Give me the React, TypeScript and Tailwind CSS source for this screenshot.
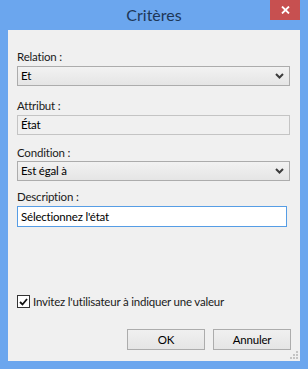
import React from 'react';

const font = { fontFamily: 'Lato, "Noto Sans", sans-serif' };

function Chevron() {
  return (
    <svg width="9" height="6" viewBox="0 0 9 6" className="shrink-0">
      <path d="M1 1 L4.5 4.5 L8 1" fill="none" stroke="#3c3c3c" strokeWidth="2" />
    </svg>
  );
}

function Select({ value }: { value: string }) {
  return (
    <div className="flex h-[20px] w-[273px] items-center justify-between border border-[#acacac] bg-gradient-to-b from-[#f2f2f2] to-[#e5e5e5] pl-[3px] pr-[5px] text-black">
      <span>{value}</span>
      <Chevron />
    </div>
  );
}

function Label({ children }: { children: React.ReactNode }) {
  return <div className="h-[16px] leading-[16px] text-[#1a1a1a]">{children}</div>;
}

function Grip() {
  return (
    <svg width="8" height="8" viewBox="0 0 8 8">
      {[
        [6, 0],
        [3, 3],
        [6, 3],
        [0, 6],
        [3, 6],
        [6, 6],
      ].map(([x, y]) => (
        <rect key={`${x}-${y}`} x={x} y={y} width="2" height="2" fill="#c4c4c4" />
      ))}
    </svg>
  );
}

export default function App() {
  return (
    <div className="flex h-[369px] w-[308px] flex-col bg-[#6ba6ee]" style={font}>
      {/* title bar */}
      <div className="flex h-[30px] shrink-0 items-start">
        <div className="w-[38px]" />
        <div className="flex h-[30px] flex-1 items-center justify-center pb-[1px] text-[16px] text-[#1d3657]">Critères</div>
        <button className="mr-[8px] flex h-[20px] w-[30px] items-center justify-center bg-[#c75050]">
          <svg width="9" height="8" viewBox="0 0 9 8">
            <path d="M1 0.5 L8 7.5 M8 0.5 L1 7.5" stroke="#fff" strokeWidth="1.8" />
          </svg>
        </button>
      </div>

      {/* client area */}
      <div className="mx-[8px] mb-[8px] flex flex-1 flex-col bg-[#f0f0f0] px-[9px] text-[11.5px] tracking-[-0.2px]">
        <div className="mt-[19px]">
          <Label>Relation :</Label>
          <div className="mt-[1px]">
            <Select value="Et" />
          </div>
        </div>

        <div className="mt-[12px]">
          <Label>Attribut :</Label>
          <div className="mt-[1px] flex h-[20px] w-[273px] items-center border border-[#c4c4c4] bg-[#f0f0f0] pl-[3px] text-black">
            État
          </div>
        </div>

        <div className="mt-[10px]">
          <Label>Condition :</Label>
          <div className="mt-[0px]">
            <Select value="Est égal à" />
          </div>
        </div>

        <div className="mt-[8px]">
          <Label>Description :</Label>
          <div className="mt-[1px] flex h-[21px] w-[270px] items-center border border-[#569de5] bg-white pl-[3px] text-black">
            Sélectionnez l'état
          </div>
        </div>

        <div className="mt-[66px] flex items-center gap-[3px] text-[#1a1a1a]">
          <div className="flex h-[13px] w-[13px] items-center justify-center border border-[#333] bg-white">
            <svg width="9" height="8" viewBox="0 0 9 8">
              <path d="M1 4 L3.5 6.5 L8 1" fill="none" stroke="#111" strokeWidth="1.8" />
            </svg>
          </div>
          <span>Invitez l'utilisateur à indiquer une valeur</span>
        </div>

        <div className="mt-[19px] flex justify-end gap-[8px]">
          <button className="h-[21px] w-[78px] border border-[#acacac] bg-gradient-to-b from-[#f0f0f0] to-[#e5e5e5] text-black">
            OK
          </button>
          <button className="h-[21px] w-[78px] border border-[#acacac] bg-gradient-to-b from-[#f0f0f0] to-[#e5e5e5] text-black">
            Annuler
          </button>
        </div>

        <div className="-mr-[7px] mt-auto mb-[2px] flex justify-end">
          <Grip />
        </div>
      </div>
    </div>
  );
}
